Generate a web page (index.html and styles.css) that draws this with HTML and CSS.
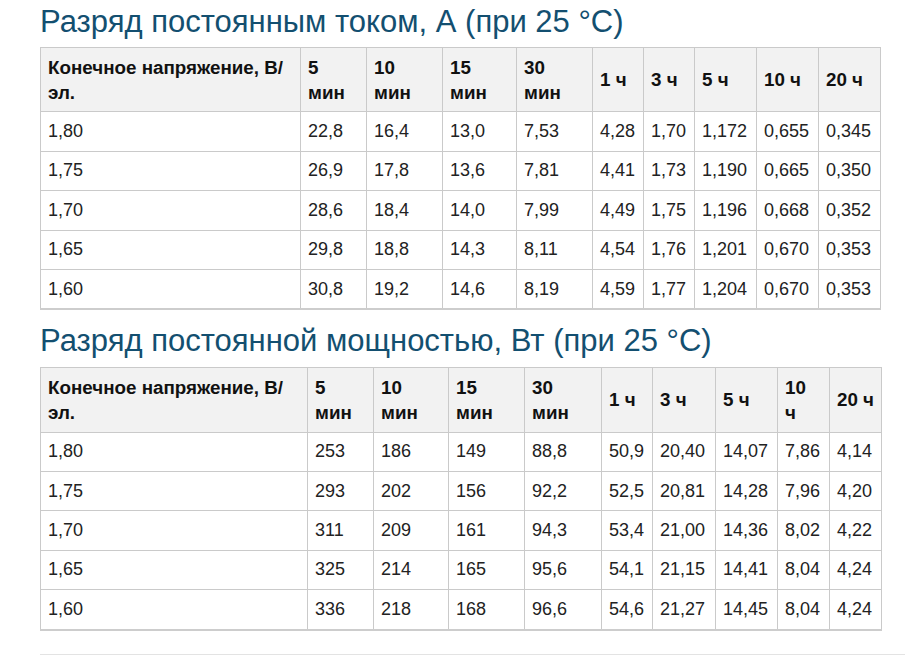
FILE: index.html
```html
<!DOCTYPE html>
<html lang="ru">
<head>
<meta charset="utf-8">
<link rel="stylesheet" href="styles.css">
</head>
<body>
<div class="page">
  <h2 class="title first">Разряд постоянным током, А (при 25 °C)</h2>
  <table class="spec">
    <colgroup>
      <col class="w260"><col class="w66"><col class="w76"><col class="w74"><col class="w76"><col class="w51"><col class="w51"><col class="w62"><col class="w62"><col class="w62">
    </colgroup>
    <thead>
      <tr><th>Конечное напряжение, В/<br>эл.</th><th>5<br>мин</th><th>10<br>мин</th><th>15<br>мин</th><th>30<br>мин</th><th class="nw">1 ч</th><th class="nw">3 ч</th><th class="nw">5 ч</th><th class="nw">10 ч</th><th class="nw">20 ч</th></tr>
    </thead>
    <tbody>
      <tr><td>1,80</td><td>22,8</td><td>16,4</td><td>13,0</td><td>7,53</td><td>4,28</td><td>1,70</td><td>1,172</td><td>0,655</td><td>0,345</td></tr>
      <tr><td>1,75</td><td>26,9</td><td>17,8</td><td>13,6</td><td>7,81</td><td>4,41</td><td>1,73</td><td>1,190</td><td>0,665</td><td>0,350</td></tr>
      <tr><td>1,70</td><td>28,6</td><td>18,4</td><td>14,0</td><td>7,99</td><td>4,49</td><td>1,75</td><td>1,196</td><td>0,668</td><td>0,352</td></tr>
      <tr><td>1,65</td><td>29,8</td><td>18,8</td><td>14,3</td><td>8,11</td><td>4,54</td><td>1,76</td><td>1,201</td><td>0,670</td><td>0,353</td></tr>
      <tr><td>1,60</td><td>30,8</td><td>19,2</td><td>14,6</td><td>8,19</td><td>4,59</td><td>1,77</td><td>1,204</td><td>0,670</td><td>0,353</td></tr>
    </tbody>
  </table>

  <h2 class="title second">Разряд постоянной мощностью, Вт (при 25 °C)</h2>
  <table class="spec">
    <colgroup>
      <col class="w267"><col class="w66"><col class="w75"><col class="w76"><col class="w77"><col class="w51"><col class="w63"><col class="w62"><col class="w52"><col class="w52">
    </colgroup>
    <thead>
      <tr><th>Конечное напряжение, В/<br>эл.</th><th>5<br>мин</th><th>10<br>мин</th><th>15<br>мин</th><th>30<br>мин</th><th class="nw">1 ч</th><th class="nw">3 ч</th><th class="nw">5 ч</th><th>10<br>ч</th><th class="nw">20 ч</th></tr>
    </thead>
    <tbody>
      <tr><td>1,80</td><td>253</td><td>186</td><td>149</td><td>88,8</td><td>50,9</td><td>20,40</td><td>14,07</td><td>7,86</td><td>4,14</td></tr>
      <tr><td>1,75</td><td>293</td><td>202</td><td>156</td><td>92,2</td><td>52,5</td><td>20,81</td><td>14,28</td><td>7,96</td><td>4,20</td></tr>
      <tr><td>1,70</td><td>311</td><td>209</td><td>161</td><td>94,3</td><td>53,4</td><td>21,00</td><td>14,36</td><td>8,02</td><td>4,22</td></tr>
      <tr><td>1,65</td><td>325</td><td>214</td><td>165</td><td>95,6</td><td>54,1</td><td>21,15</td><td>14,41</td><td>8,04</td><td>4,24</td></tr>
      <tr><td>1,60</td><td>336</td><td>218</td><td>168</td><td>96,6</td><td>54,6</td><td>21,27</td><td>14,45</td><td>8,04</td><td>4,24</td></tr>
    </tbody>
  </table>
  <div class="divider"></div>
</div>
</body>
</html>
```

FILE: styles.css
```css
* { box-sizing: border-box; }
html, body { margin: 0; padding: 0; background: #fff; }
body {
  font-family: "Liberation Sans", Arial, sans-serif;
  color: #1e1e1e;
  overflow: hidden;
}
.page {
  padding-left: 40px;
}
.title {
  font-family: "Liberation Sans", Arial, sans-serif;
  font-weight: normal;
  font-size: 31px;
  line-height: 36px;
  color: #134f70;
  margin: 0;
}
.title.first { padding-top: 4px; margin-bottom: 7px; }
.title.second { margin-top: 13px; margin-bottom: 8px; }

.spec {
  width: 840px;
  border-collapse: collapse;
  table-layout: fixed;
  font-size: 18px;
  line-height: 25px;
  border-bottom: 2px solid #cdcdcd;
}
.spec th, .spec td {
  border: 1px solid #cacaca;
  padding: 6.7px 2px 6.7px 7px;
  text-align: left;
  vertical-align: middle;
  overflow: hidden;
}
.spec th {
  background: #f2f2f2;
  font-weight: bold;
  font-size: 18.8px;
  color: #111;
}
.spec th.nw { white-space: nowrap; }
.spec td { color: #222; white-space: nowrap; }

.w260 { width: 260px; }
.w267 { width: 267px; }
.w66 { width: 66px; }
.w74 { width: 74px; }
.w75 { width: 75px; }
.w76 { width: 76px; }
.w77 { width: 77px; }
.w51 { width: 51px; }
.w52 { width: 52px; }
.w62 { width: 62px; }
.w63 { width: 63px; }

.divider {
  margin-top: 23px;
  height: 1px;
  background: #e3e3e3;
}
```
